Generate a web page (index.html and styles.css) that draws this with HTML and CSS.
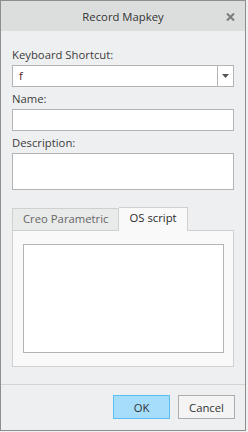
FILE: index.html
```html
<!DOCTYPE html>
<html lang="en">
<head>
    <meta charset="UTF-8">
    <meta name="viewport" content="width=device-width, initial-scale=1.0">
    <title>Record Mapkey</title>
    <link rel="stylesheet" href="styles.css">
</head>
<body>
    <div class="dialog">
        <div class="title-bar">
            <span class="title">Record Mapkey</span>
            <svg class="close" width="9" height="8" viewBox="0 0 9 8">
                <path d="M1 0.5 L8 7.5 M8 0.5 L1 7.5" stroke="#7a7a7a" stroke-width="2"/>
            </svg>
        </div>
        <div class="content">
            <div class="field first">
                <label>Keyboard Shortcut:</label>
                <div class="combo">
                    <span class="combo-value">f</span>
                    <span class="combo-button">
                        <svg width="7" height="4" viewBox="0 0 7 4"><path d="M0 0 H7 L3.5 4 Z" fill="#555"/></svg>
                    </span>
                </div>
            </div>
            <div class="field">
                <label>Name:</label>
                <div class="input"></div>
            </div>
            <div class="field">
                <label>Description:</label>
                <div class="input tall"></div>
            </div>
            <div class="tabs">
                <div class="tab">Creo Parametric</div>
                <div class="tab active">OS script</div>
            </div>
            <div class="tab-panel">
                <div class="script-box"></div>
            </div>
        </div>
        <div class="footer">
            <button class="btn primary">OK</button>
            <button class="btn">Cancel</button>
        </div>
    </div>
</body>
</html>
```

FILE: styles.css
```css
body {
    margin: 0;
    background: #f0f0f0;
    font-family: "Open Sans", "Noto Sans", sans-serif;
    font-size: 11.3px;
    color: #3c3c3c;
}
.dialog {
    width: 246px;
    height: 431px;
    box-sizing: border-box;
    border: 1px solid #8e8e8e;
    background: #eeeff0;
    display: flex;
    flex-direction: column;
}
.title-bar {
    height: 30px;
    background: #dcdede;
    display: flex;
    align-items: center;
    justify-content: center;
    position: relative;
    flex-shrink: 0;
}
.title {
    color: #333;
}
.close {
    position: absolute;
    right: 10px;
    top: 12px;
}
.content {
    padding: 0 11px;
}
.field {
    display: flex;
    flex-direction: column;
    margin-top: 4px;
}
.field.first {
    margin-top: 16px;
}
.field label {
    line-height: 16px;
    margin-bottom: 2px;
}
.combo {
    height: 22px;
    box-sizing: border-box;
    border: 1px solid #b4b4b4;
    background: #fff;
    display: flex;
}
.combo-value {
    flex: 1;
    line-height: 20px;
    padding-left: 6px;
    color: #5a2a2a;
}
.combo-button {
    width: 15px;
    border-left: 1px solid #b4b4b4;
    display: flex;
    align-items: center;
    justify-content: center;
}
.input {
    height: 22px;
    box-sizing: border-box;
    border: 1px solid #b4b4b4;
    background: #fff;
}
.input.tall {
    height: 37px;
}
.tabs {
    display: flex;
    align-items: flex-end;
    margin-top: 17px;
    height: 23px;
}
.tab {
    height: 22px;
    box-sizing: border-box;
    padding: 0 10px;
    line-height: 20px;
    border: 1px solid #d0d0d0;
    border-bottom: none;
    background: #e9eaea;
    color: #666;
}
.tab.active {
    height: 24px;
    margin-bottom: -1px;
    background: #f9f9f9;
    color: #2a2a2a;
    border-left: none;
    position: relative;
}
.tab-panel {
    border: 1px solid #d0d0d0;
    background: #f9f9f9;
    padding: 13px 9px 13px 10px;
    height: 137px;
    box-sizing: border-box;
}
.script-box {
    height: 100%;
    box-sizing: border-box;
    border: 1px solid #b4b4b4;
    background: #fff;
}
.footer {
    margin-top: auto;
    border-top: 1px solid #d4d4d4;
    display: flex;
    justify-content: flex-end;
    gap: 8px;
    padding: 10px 10px 11px;
}
.btn {
    width: 57px;
    height: 24px;
    padding: 0;
    font-family: inherit;
    font-size: 11.3px;
    color: #333;
    border: 1px solid #adadad;
    background: #f4f4f4;
}
.btn.primary {
    background: #a5ddfb;
    border-color: #5cbdf0;
}
```
